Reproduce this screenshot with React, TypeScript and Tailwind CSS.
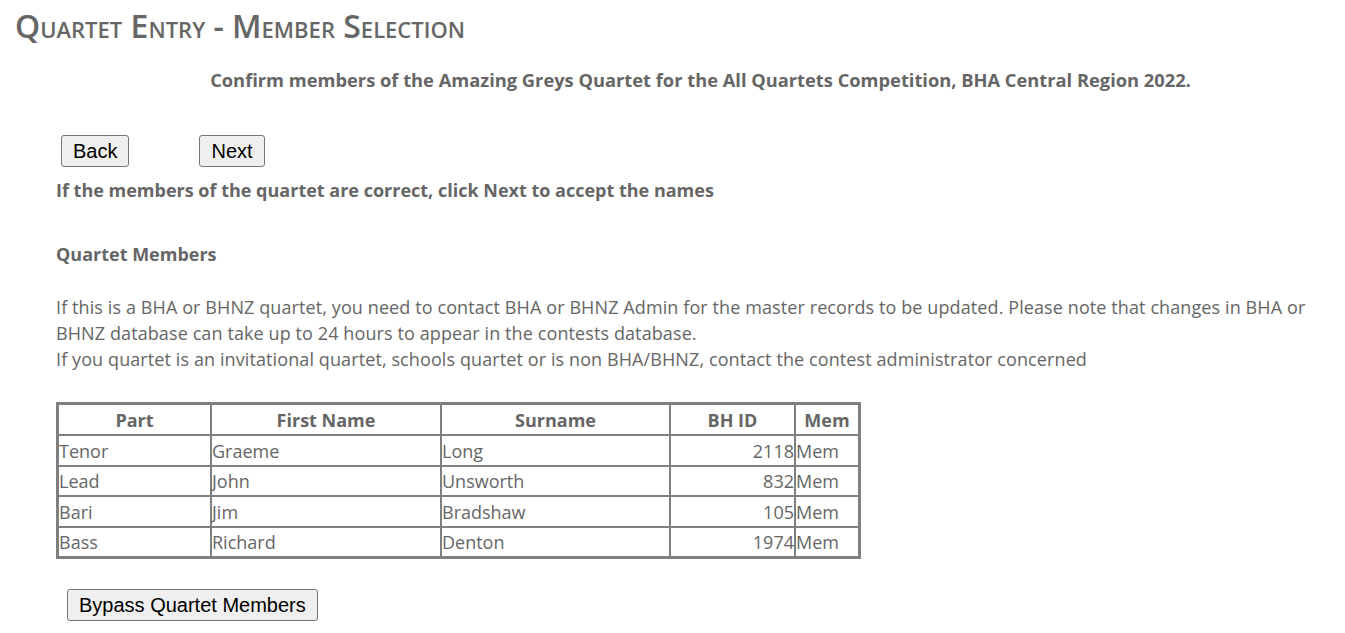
export default function App() {
  const rows = [
    ["Tenor", "Graeme", "Long", "2118", "Mem"],
    ["Lead", "John", "Unsworth", "832", "Mem"],
    ["Bari", "Jim", "Bradshaw", "105", "Mem"],
    ["Bass", "Richard", "Denton", "1974", "Mem"],
  ];
  const btn =
    "bg-[#efefef] border border-[#767676] rounded-[3px] text-black text-[20px] leading-none px-[11px] h-[32px] font-['Liberation_Sans',Arial,sans-serif]";
  return (
    <div className="min-h-screen bg-white text-[#666666] font-['Open_Sans',sans-serif]">
      <h1 className="pl-[15px] pt-[6px] text-[32px] font-semibold [font-variant:small-caps] leading-[40px] text-[#666666]">
        Quartet Entry - Member Selection
      </h1>
      <p className="mt-[21px] text-center text-[18.3px] font-bold leading-[26px] pl-[56px]">
        Confirm members of the Amazing Greys Quartet for the All Quartets Competition, BHA Central Region 2022.
      </p>
      <div className="pl-[61px] mt-[42px] flex gap-[70px]">
        <button className={btn}>Back</button>
        <button className={btn}>Next</button>
      </div>
      <p className="pl-[56px] mt-[10px] text-[18px] font-bold leading-[26px]">
        If the members of the quartet are correct, click Next to accept the names
      </p>
      <p className="pl-[56px] mt-[38px] text-[18px] font-bold leading-[26px]">Quartet Members</p>
      <div className="pl-[56px] pr-[30px] mt-[27px] text-[18px] tracking-[0.1px] leading-[26px]">
        <p>
          If this is a BHA or BHNZ quartet, you need to contact BHA or BHNZ Admin for the master records to be updated. Please note that changes in BHA or BHNZ database can take up to 24 hours to appear in the contests database.
        </p>
        <p>
          If you quartet is an invitational quartet, schools quartet or is non BHA/BHNZ, contact the contest administrator concerned
        </p>
      </div>
      <div className="pl-[56px] mt-[30px]">
        <table className="border-2 border-[#808080] border-separate border-spacing-0 text-[18px] leading-[24px]">
          <thead>
            <tr>
              {["Part", "First Name", "Surname", "BH ID", "Mem"].map((h, i) => (
                <th
                  key={h}
                  className={`border border-[#808080] font-bold h-[31px] text-center ${
                    ["w-[153px]", "w-[230px]", "w-[229px]", "w-[125px]", "w-[64px]"][i]
                  }`}
                >
                  {h}
                </th>
              ))}
            </tr>
          </thead>
          <tbody>
            {rows.map((r) => (
              <tr key={r[0]}>
                {r.map((c, i) => (
                  <td
                    key={i}
                    className={`border border-[#808080] h-[30.5px] pt-[1px] px-0 ${i === 3 ? "text-right" : "text-left"}`}
                  >
                    {c}
                  </td>
                ))}
              </tr>
            ))}
          </tbody>
        </table>
      </div>
      <div className="pl-[67px] mt-[30px] pb-[12px]">
        <button className={btn}>Bypass Quartet Members</button>
      </div>
    </div>
  );
}
